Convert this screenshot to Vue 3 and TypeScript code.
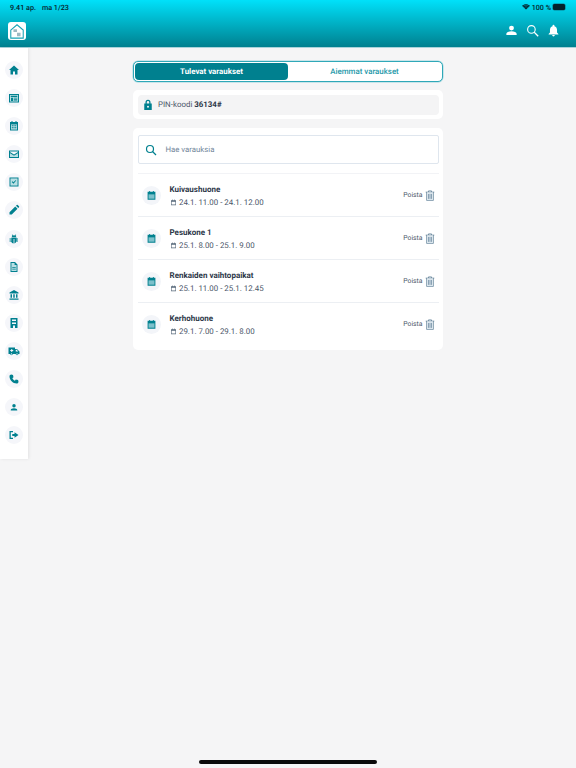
<script setup lang="ts">
interface Booking {
  name: string
  time: string
}

interface NavIcon {
  d: string
  tint?: string
}

const navIcons: NavIcon[] = [
  { d: 'M12 3 2 12h3v9h5v-6h4v6h5v-9h3z' },
  { d: 'M2 4h20v17H2zm2 2v13h16V6zm1.500 1.500h13v2.500h-13zM6 11.500h4V18H6zm5.500 0h7V13h-7zm0 3h7V16h-7zm0 2.500h7v1h-7z', tint: 'M4 6h16v13H4z' },
  { d: 'M7 2h2v2h6V2h2v2h3v17H4V4h3zM6 9v10h12V9zm1.500 1.500h2.500v2.200H7.500zm3.300 0h2.500v2.200h-2.500zm3.300 0h2.500v2.200h-2.500zM7.500 14.500h2.500v2.200H7.500zm3.300 0h2.500v2.200h-2.500zm3.300 0h2.500v2.200h-2.500z', tint: 'M6 9h12v10H6z' },
  { d: 'M2 5h20v15H2zm2 2v.8l8 5.200 8-5.200V7zm0 3.400V18h16v-7.600l-8 5.200z', tint: 'M4 10.400l8 5.200 8-5.200V18H4z' },
  { d: 'M3 3h18v18H3zm2 2v14h14V5zm2.500 7 1.500-1.500 2 2 4-4L16.500 9 11 15.500z', tint: 'M5 5h14v14H5z' },
  { d: 'M3 21v-4.500L14.500 5l4.500 4.500L7.500 21zM16 3.500 17.500 2a1.400 1.400 0 0 1 2 0L22 4.500a1.400 1.400 0 0 1 0 2L20.500 8z' },
  { d: 'M9 5.500 7.500 4 9 3l2 2h2l2-2 1.500 1L15 5.500a4 4 0 0 1 1.500 2.500h-9A4 4 0 0 1 9 5.500zM7 9h10v2h3v2h-3v2h3v2h-3.300A5.500 5.500 0 0 1 12.800 21V12h-1.600v9a5.500 5.500 0 0 1-4.900-4H3v-2h4v-2H3v-2h4z' },
  { d: 'M5 2h9l5 5v15H5zm2 2v16h10V8h-4V4zm1.500 8.500h7v1.500h-7zm0 3h7V17h-7z', tint: 'M7 4h6v4h4v12H7z' },
  { d: 'M12 2 3 7v2h18V7zM5 10.500v7h3v-7zm5.500 0v7h3v-7zm5.500 0v7h3v-7zM3 19v2.500h18V19z' },
  { d: 'M5 2h14v20h-5v-5h-4v5H5zm3 3v3h8V5zm0 6v3h8v-3z' },
  { d: 'M1 5h13v3h4l5 5v5h-2.200a2.800 2.800 0 0 1-5.500 0H9.700a2.800 2.800 0 0 1-5.500 0H1zm14.500 4.500V13h5l-3-3.500zM7 16.500a1.300 1.300 0 1 0 0 2.600 1.300 1.300 0 0 0 0-2.600zm11 0a1.300 1.300 0 1 0 0 2.600 1.300 1.300 0 0 0 0-2.600zM6.500 8v2H4.500v2h2v2h2v-2h2v-2h-2V8z' },
  { d: 'M6.600 3 10 3.800l1 4.700-2.300 1.900a13 13 0 0 0 5 5l1.900-2.300 4.600 1L21 17.400c0 2-1.600 3.600-3.600 3.600C9.500 21 3 14.500 3 6.600 3 4.600 4.600 3 6.600 3z' },
  { d: 'M12 6a3.500 3.500 0 1 1 0 7 3.500 3.500 0 0 1 0-7zm0 8.500c3.500 0 6.500 1.500 6.500 3.500v1h-13v-1c0-2 3-3.500 6.500-3.500z' },
  { d: 'M3 4h7v2.500H5.500v11H10V20H3zm10 2.500L21 12l-8 5.500v-3.300H8.500V9.800H13z' },
]

const bookings: Booking[] = [
  { name: 'Kuivaushuone', time: '24.1. 11.00 - 24.1. 12.00' },
  { name: 'Pesukone 1', time: '25.1. 8.00 - 25.1. 9.00' },
  { name: 'Renkaiden vaihtopaikat', time: '25.1. 11.00 - 25.1. 12.45' },
  { name: 'Kerhohuone', time: '29.1. 7.00 - 29.1. 8.00' },
]
</script>

<template>
  <div class="screen">
    <header class="topbar">
      <div class="status">
        <span>9.41 ap.</span>
        <span>ma 1/23</span>
        <span class="spacer"></span>
        <svg class="wifi" viewBox="0 0 16 12"><path d="M8 11 0 3.500C4.500-.8 11.500-.8 16 3.500z" fill="#04222c"/><path d="M2.600 4.400c3-2.500 7.800-2.500 10.800 0" stroke="#00d4ea" stroke-width=".8" fill="none"/><path d="M4.800 6.700c1.800-1.400 4.600-1.400 6.400 0" stroke="#00d4ea" stroke-width=".8" fill="none"/></svg>
        <span>100 %</span>
        <span class="battery"></span>
      </div>
      <div class="toolbar">
        <div class="logo">
          <svg viewBox="0 0 18 18" width="16" height="16"><path d="M2 8 9 2l7 6v9H2z" fill="none" stroke="#17a3b5" stroke-width="1.200"/><path d="M5 7h4v3H5zM9 11h4v4H9z" fill="#9fb9c2"/></svg>
        </div>
        <span class="spacer"></span>
        <svg class="top-icon" viewBox="0 0 24 24"><path d="M12 3a4.500 4.500 0 1 1 0 9 4.500 4.500 0 0 1 0-9zm0 10.500c4.800 0 9.500 2 9.500 4.500v2.500h-19V18c0-2.500 4.700-4.500 9.500-4.500z" fill="#fff"/></svg>
        <svg class="top-icon" viewBox="0 0 24 24"><circle cx="10" cy="10" r="7" fill="none" stroke="#fff" stroke-width="2"/><path d="m15 15 7.500 7.500" stroke="#fff" stroke-width="2.600"/></svg>
        <svg class="top-icon" viewBox="0 0 24 24"><path d="M12 1.500a1.800 1.800 0 0 1 1.800 1.800v.9c3 .9 4.700 3.500 4.700 6.600v5l2.500 2.500v1.200H3v-1.200L5.500 15.800v-5c0-3.100 1.700-5.700 4.700-6.600v-.9A1.800 1.800 0 0 1 12 1.500zm-2.400 19h4.800a2.400 2.400 0 0 1-4.800 0z" fill="#fff"/></svg>
      </div>
    </header>

    <div class="body">
      <nav class="sidebar">
        <div v-for="(icon, i) in navIcons" :key="i" class="nav-item">
          <svg viewBox="0 0 24 24" width="12" height="12">
            <path v-if="icon.tint" :d="icon.tint" fill="#b9dfe4"/>
            <path :d="icon.d" fill="#00808f" fill-rule="evenodd"/>
          </svg>
        </div>
      </nav>

      <main class="content">
        <div class="tabs">
          <button class="tab active">Tulevat varaukset</button>
          <button class="tab">Aiemmat varaukset</button>
        </div>

        <section class="card pin-card">
          <div class="pin">
            <svg viewBox="0 0 24 24" width="12" height="12"><path d="M12 1.500A5 5 0 0 0 7 6.500V9H4.500v13h15V9H17V6.500a5 5 0 0 0-5-5zm0 2.500a2.500 2.500 0 0 1 2.500 2.500V9h-5V6.500A2.500 2.500 0 0 1 12 4zm0 9.500a2 2 0 1 1 0 4 2 2 0 0 1 0-4z" fill="#00808f" fill-rule="evenodd"/></svg>
            <span>PIN-koodi <b>36134#</b></span>
          </div>
        </section>

        <section class="card list-card">
          <div class="search">
            <svg viewBox="0 0 24 24" width="12" height="12"><circle cx="10" cy="10" r="7" fill="none" stroke="#00808f" stroke-width="2.400"/><path d="m15 15 7 7" stroke="#00808f" stroke-width="2.600"/></svg>
            <span>Hae varauksia</span>
          </div>
          <ul class="rows">
            <li v-for="b in bookings" :key="b.name" class="row">
              <div class="row-icon">
                <svg viewBox="0 0 24 24" width="11" height="11"><path d="M7 2h2v2h6V2h2v2h3.500v17h-17V4H7z" fill="#00808f"/><path d="M5.500 9.500h13V19h-13z" fill="#7cc0cb"/></svg>
              </div>
              <div class="row-text">
                <div class="row-name">{{ b.name }}</div>
                <div class="row-time">
                  <svg viewBox="0 0 24 24" width="7" height="7"><path d="M7 2h2v2h6V2h2v2h3.500v17h-17V4H7zM5.500 9.500V19h13V9.500z" fill="#56687a" fill-rule="evenodd"/></svg>
                  <span>{{ b.time }}</span>
                </div>
              </div>
              <span class="remove">Poista</span>
              <svg class="trash" viewBox="0 0 16 18" width="10" height="11"><path d="M1 3.500h14M5.500 3.500V1.500h5v2M2.500 3.500v13.500h11V3.500" fill="none" stroke="#5f7f96" stroke-width="1.300"/><path d="M3 4h10v12.500H3z" fill="#dbe6ed"/><path d="M5.500 6.500v8M8 6.500v8M10.500 6.500v8" fill="none" stroke="#5f7f96" stroke-width="1.100"/></svg>
            </li>
          </ul>
        </section>
      </main>
    </div>

    <div class="home-bar"></div>
  </div>
</template>

<style>
html, body { margin: 0; background: #f5f5f6; }
</style>

<style scoped>
.screen { position: relative; width: 576px; height: 768px; overflow: hidden; display: flex; flex-direction: column; background: #f5f5f6; font-family: Roboto, "Liberation Sans", sans-serif; color: #2d3748; text-rendering: geometricPrecision; }
.spacer { flex: 1; }

.topbar { height: 47px; background: linear-gradient(180deg, #00e1fa 0%, #00808f 100%); border-bottom: 1px solid #a9d3da; flex: none; }
.status { height: 14px; display: flex; align-items: center; gap: 6px; padding: 0 11px 0 10px; font-size: 7.2px; font-weight: 500; color: #04222c; }
.wifi { width: 8px; height: 6px; margin-right: -4px; }
.battery { width: 12px; height: 6px; background: #04222c; border-radius: 1.500px; margin-left: -4px; box-shadow: 0 0 0 .6px #0a7c8d; display: block; }
.toolbar { height: 33px; display: flex; align-items: center; padding: 0 16px 0 8px; gap: 8px; }
.logo { width: 18px; height: 18px; background: #fff; border-radius: 3px; display: flex; align-items: center; justify-content: center; }
.top-icon { width: 13px; height: 13px; }

.body { flex: 1; display: flex; align-items: flex-start; }
.sidebar { width: 28px; flex: none; background: #fff; padding: 8px 0 10px; box-shadow: 1px 0 3px rgba(0, 0, 0, .08); }
.nav-item { height: 28.080px; display: flex; align-items: center; justify-content: center; position: relative; }
.nav-item::before { content: ""; position: absolute; width: 18px; height: 18px; border-radius: 50%; background: #f5f6fa; }
.nav-item svg { position: relative; }

.content { width: 310px; margin-left: 105px; padding-top: 13px; }
.tabs { height: 21px; box-sizing: border-box; display: flex; border: 1px solid #2fa8b8; border-radius: 5px; background: #fff; padding: 1px; box-shadow: 0 0 0 .5px #9fd6de; }
.tab { flex: 1; border: 0; background: none; padding: 0; font: 500 7.9px Roboto, sans-serif; color: #1d98a9; border-radius: 4px; text-rendering: geometricPrecision; }
.tab.active { background: #00808f; color: #fff; font-weight: 700; }

.card { background: #fff; border-radius: 5px; padding: 4.500px; box-sizing: border-box; }
.pin-card { margin-top: 8px; height: 29px; }
.pin { height: 20px; background: #f4f4f5; border-radius: 4px; display: flex; align-items: center; gap: 4.500px; padding: 0 4px; font-size: 7.9px; color: #4a5568; }
.pin b { color: #2d3748; font-weight: 700; }

.list-card { margin-top: 9px; height: 222px; padding-top: 7px; }
.search { height: 29px; box-sizing: border-box; border: 1px solid #dfe6ee; border-radius: 2px; display: flex; align-items: center; gap: 9px; padding: 0 6px; font-size: 7.8px; color: #72869a; }
.rows { list-style: none; margin: 9px 0 0; padding: 0; border-top: 1px solid #f2f3f6; }
.row { height: 42px; border-bottom: 1px solid #eceff3; display: flex; align-items: center; padding: 0 4px 0 4px; }
.row:last-child { border-bottom: 0; }
.row-icon { width: 19px; height: 19px; border-radius: 50%; background: #f3f5f9; display: flex; align-items: center; justify-content: center; margin-right: 9px; }
.row-text { flex: 1; padding-top: 3px; }
.row-name { font-size: 8px; font-weight: 700; color: #2d3748; line-height: 12px; }
.row-time { display: flex; align-items: center; gap: 2.500px; margin-top: .5px; font-size: 7.9px; color: #4a5568; line-height: 13px; }
.remove { font-size: 6.8px; color: #4a5568; margin-right: 2px; }

.home-bar { position: absolute; left: 199px; bottom: 4px; width: 178px; height: 4px; border-radius: 2px; background: #0a0a0a; }
</style>
